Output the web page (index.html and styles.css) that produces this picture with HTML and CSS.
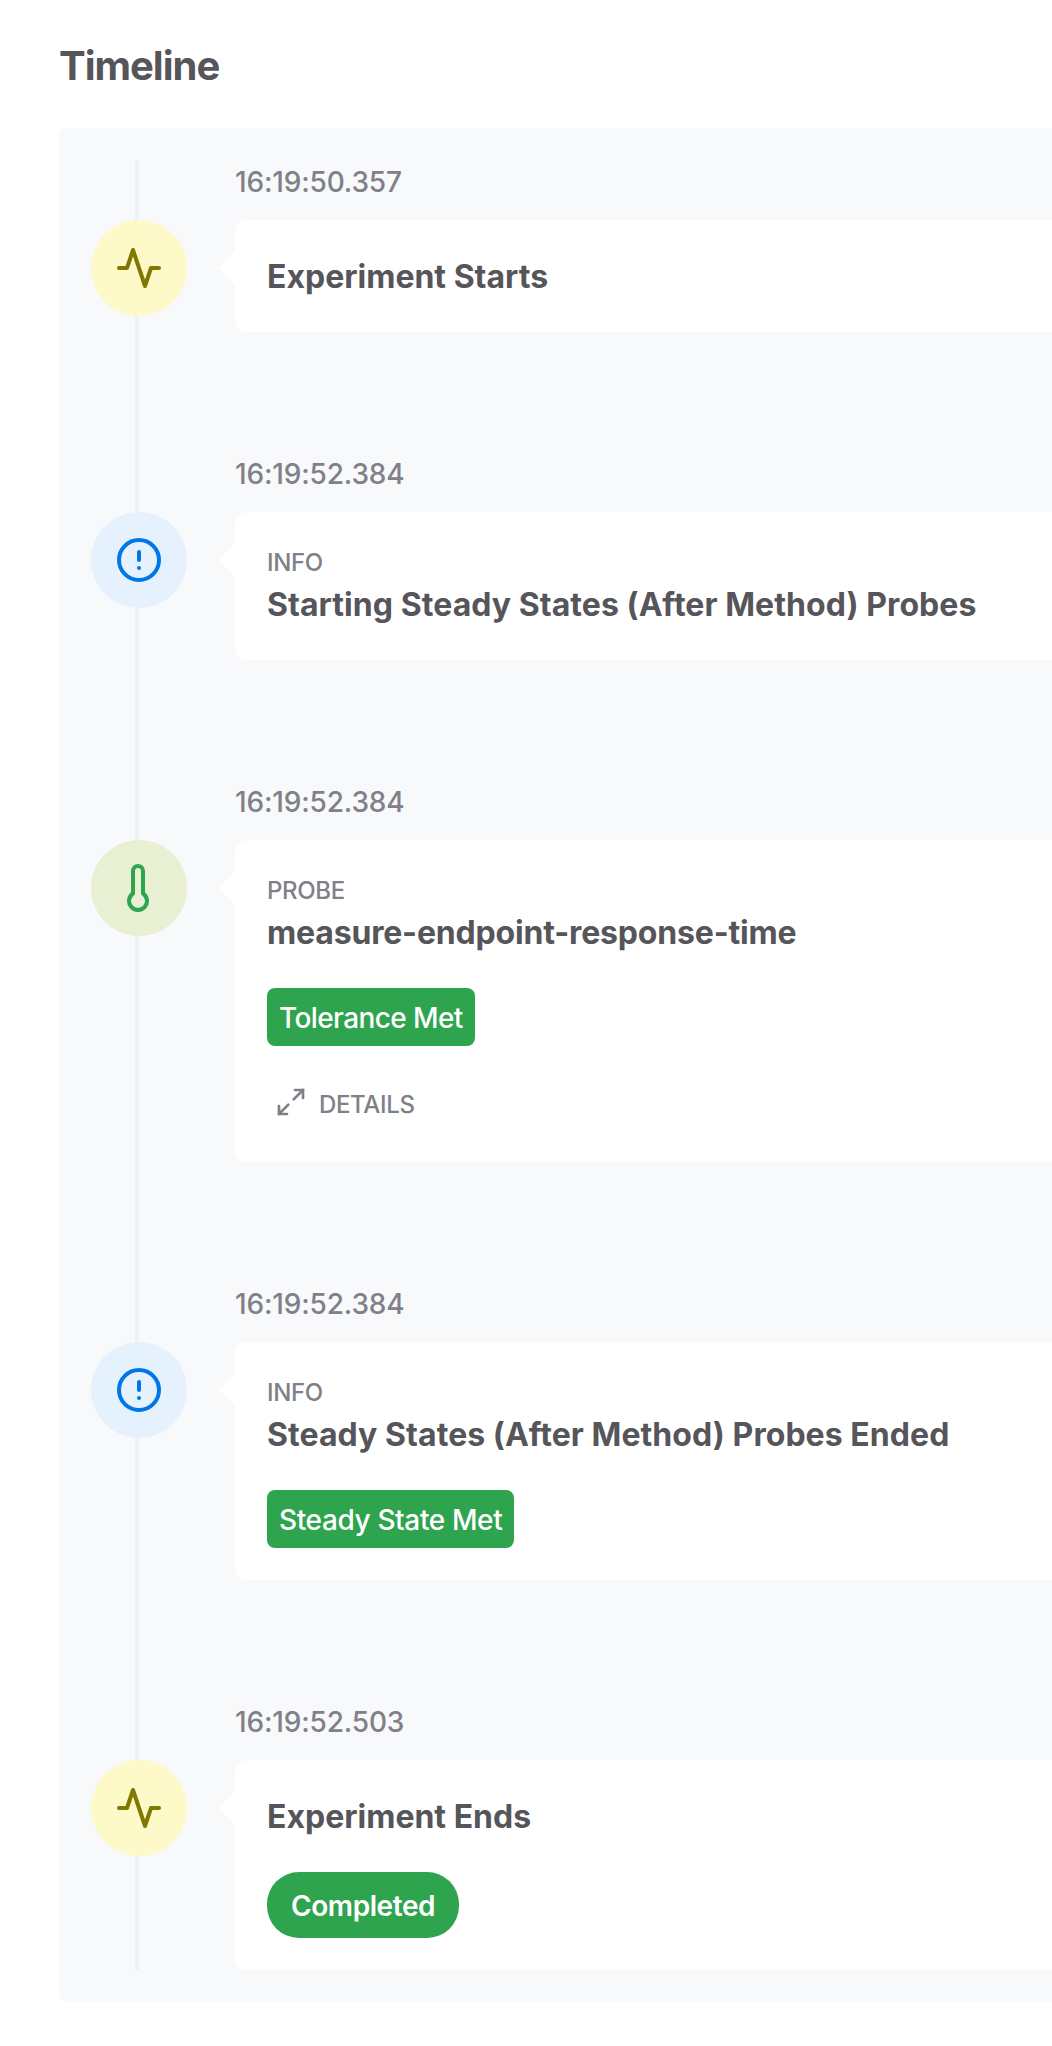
FILE: index.html
```html
<!DOCTYPE html>
<html lang="en">
<head>
<meta charset="utf-8">
<title>Timeline</title>
<link rel="stylesheet" href="styles.css">
</head>
<body>
<main class="page">
  <h1 class="heading">Timeline</h1>
  <section class="panel">
    <ol class="timeline">
      <li class="event">
        <div class="marker marker-edge">
          <svg class="icon" viewBox="0 0 24 24"><polyline points="22 12 18 12 15 21 9 3 6 12 2 12"/></svg>
        </div>
        <div class="body">
          <time class="time">16:19:50.357</time>
          <article class="card">
            <h2 class="title">Experiment Starts</h2>
          </article>
        </div>
      </li>
      <li class="event">
        <div class="marker marker-info">
          <svg class="icon" viewBox="0 0 24 24"><circle cx="12" cy="12" r="10"/><line x1="12" y1="8" x2="12" y2="12"/><line x1="12" y1="16" x2="12" y2="16"/></svg>
        </div>
        <div class="body">
          <time class="time">16:19:52.384</time>
          <article class="card">
            <p class="kind">INFO</p>
            <h2 class="title title-long">Starting Steady States (After Method) Probes</h2>
          </article>
        </div>
      </li>
      <li class="event">
        <div class="marker marker-probe">
          <svg class="icon" viewBox="0 0 24 24"><path d="M14 14.76V3.5a2.5 2.5 0 0 0-5 0v11.26a4.5 4.5 0 1 0 5 0z"/></svg>
        </div>
        <div class="body">
          <time class="time">16:19:52.384</time>
          <article class="card">
            <p class="kind">PROBE</p>
            <h2 class="title title-name">measure-endpoint-response-time</h2>
            <span class="badge badge-tolerance">Tolerance Met</span>
            <div class="details">
              <svg class="expand" viewBox="0 0 24 24"><polyline points="15 3 21 3 21 9"/><polyline points="9 21 3 21 3 15"/><line x1="21" y1="3" x2="14" y2="10"/><line x1="3" y1="21" x2="10" y2="14"/></svg>
              <span class="details-label">DETAILS</span>
            </div>
          </article>
        </div>
      </li>
      <li class="event">
        <div class="marker marker-info">
          <svg class="icon" viewBox="0 0 24 24"><circle cx="12" cy="12" r="10"/><line x1="12" y1="8" x2="12" y2="12"/><line x1="12" y1="16" x2="12" y2="16"/></svg>
        </div>
        <div class="body">
          <time class="time">16:19:52.384</time>
          <article class="card">
            <p class="kind">INFO</p>
            <h2 class="title title-long">Steady States (After Method) Probes Ended</h2>
            <span class="badge badge-steady">Steady State Met</span>
          </article>
        </div>
      </li>
      <li class="event">
        <div class="marker marker-edge">
          <svg class="icon" viewBox="0 0 24 24"><polyline points="22 12 18 12 15 21 9 3 6 12 2 12"/></svg>
        </div>
        <div class="body">
          <time class="time">16:19:52.503</time>
          <article class="card">
            <h2 class="title">Experiment Ends</h2>
            <span class="badge badge-pill">Completed</span>
          </article>
        </div>
      </li>
    </ol>
  </section>
</main>
</body>
</html>
```
FILE: styles.css
```css
* { box-sizing: border-box; }

body {
  margin: 0;
  background: #fff;
  color: #55555a;
  font-family: Inter, "Liberation Sans", sans-serif;
}

h1, h2, p, ol { margin: 0; padding: 0; }

.page { padding: 36px 0 44px 59px; }

.heading {
  margin-bottom: 32px;
  font-size: 40px;
  line-height: 60px;
  font-weight: 700;
  letter-spacing: -1px;
}

.panel {
  padding: 32px 0 32px 32px;
  border-radius: 8px 0 0 8px;
  background: #f8f9fb;
}

.timeline {
  position: relative;
  display: flex;
  flex-direction: column;
  gap: 120px;
  list-style: none;
}

/* vertical rail behind the markers */
.timeline::before {
  content: "";
  position: absolute;
  top: 0;
  bottom: 0;
  left: 44px;
  width: 4px;
  background: #f0f1f6;
}

.event {
  position: relative;
  display: flex;
  align-items: flex-start;
  gap: 48px;
}

.marker {
  display: flex;
  flex: none;
  align-items: center;
  justify-content: center;
  width: 96px;
  height: 96px;
  margin-top: 60px;
  border-radius: 50%;
}

.marker-edge { background: #fdf9c9; color: #807800; }
.marker-info { background: #e6f1fe; color: #0077e6; }
.marker-probe { background: #e9efd3; color: #2fa44f; }

.icon, .expand {
  fill: none;
  stroke: currentColor;
  stroke-width: 2;
  stroke-linecap: round;
  stroke-linejoin: round;
}

.icon { width: 48px; height: 48px; }

.body { flex: 1; min-width: 0; }

.time {
  display: block;
  margin-bottom: 16px;
  color: #808088;
  font-size: 28px;
  line-height: 44px;
  font-weight: 500;
  letter-spacing: -0.16px;
}

.card {
  position: relative;
  padding: 33px 0 32px 32px;
  border-radius: 12px 0 0 12px;
  background: #fff;
}

/* arrow pointing at the marker */
.card::before {
  content: "";
  position: absolute;
  top: 32px;
  left: -16px;
  border: solid transparent;
  border-width: 16px 16px 16px 0;
  border-right-color: #fff;
}

.kind {
  color: #808088;
  font-size: 24px;
  line-height: 36px;
  font-weight: 500;
  letter-spacing: -0.35px;
}

.title {
  margin-bottom: -1px;
  font-size: 32px;
  line-height: 48px;
  font-weight: 700;
  white-space: nowrap;
}

.title-long { letter-spacing: 0.06px; }
.title-name { letter-spacing: -0.17px; }

.badge {
  display: block;
  width: fit-content;
  margin-top: 32px;
  padding: 9px 12px 7px;
  border-radius: 8px;
  background: #2fa44f;
  color: #fff;
  font-size: 28px;
  line-height: 42px;
  font-weight: 500;
  white-space: nowrap;
}

.badge-tolerance { letter-spacing: -0.6px; }
.badge-steady { letter-spacing: -0.38px; }

.badge-pill {
  padding: 13px 24px 11px;
  border-radius: 32px;
  font-weight: 600;
  letter-spacing: -0.42px;
}

.details {
  display: flex;
  align-items: flex-start;
  gap: 12px;
  margin-top: 32px;
  padding: 8px 0 8px 8px;
  color: #808088;
  font-size: 24px;
  line-height: 36px;
  font-weight: 500;
  letter-spacing: -0.35px;
}

.details-label { margin: 1px 0 -1px; }

.expand {
  width: 32px;
  height: 32px;
  stroke-linejoin: miter;
}
```
